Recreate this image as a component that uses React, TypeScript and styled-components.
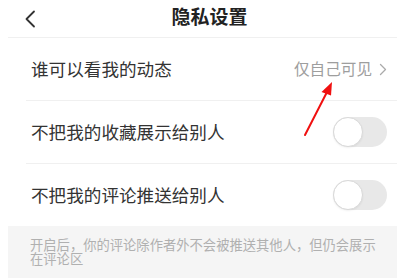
import React from "react";
import styled, { createGlobalStyle } from "styled-components";

const Global = createGlobalStyle`
  html, body { margin: 0; padding: 0; background: #fff; }
  body { font-family: "Noto Sans CJK SC", "Noto Sans", sans-serif; -webkit-font-smoothing: antialiased; }
`;

const Page = styled.div`
  position: relative;
  width: 400px;
  height: 279px;
  overflow: hidden;
  background: #fff;
`;

const Panel = styled.div`
  margin-left: 8px;
  width: 389px;
  display: flex;
  flex-direction: column;
`;

const Header = styled.div`
  height: 37px;
  display: grid;
  grid-template-columns: 40px 1fr 40px;
  align-items: center;
  border-bottom: 1px solid #f0f0f0;
`;

const Back = styled.div`
  display: flex;
  align-items: center;
  padding-left: 16px;
  height: 100%;
`;

const Title = styled.div`
  justify-self: center;
  padding-left: 14px;
  font-size: 19px;
  font-weight: 700;
  color: #222;
  line-height: 1;
  margin-top: -6px;
`;

const Row = styled.div<{ $last?: boolean }>`
  height: 62px;
  margin-left: 18px;
  display: flex;
  align-items: center;
  justify-content: space-between;
  padding-left: 5px;
  padding-right: 10px;
  border-bottom: ${(p) => (p.$last ? "none" : "1px solid #f0f0f0")};
`;

const Label = styled.span`
  font-size: 17.6px;
  color: #333;
  line-height: 1;
`;

const Value = styled.span`
  display: flex;
  align-items: center;
  gap: 7px;
  font-size: 15.6px;
  color: #9e9e9e;
  line-height: 1;
`;

const Track = styled.div`
  width: 54px;
  height: 30px;
  border-radius: 15px;
  background: #e8e8e8;
  display: flex;
  align-items: center;
`;

const Knob = styled.div`
  width: 28px;
  height: 28px;
  border-radius: 50%;
  background: #fff;
  border: 1px solid #d9d9d9;
  box-shadow: 0 1px 2px rgba(0, 0, 0, 0.06);
`;

const Note = styled.div`
  background: #f5f5f5;
  height: 52px;
  box-sizing: border-box;
  padding: 12px 0 0 22px;
  font-size: 13.3px;
  line-height: 14px;
  color: #b0b0b0;
`;

const NoteText = styled.div`
  width: 352px;
`;

const Arrow = styled.svg`
  position: absolute;
  left: 0;
  top: 0;
  pointer-events: none;
`;

const Switch = () => (
  <Track>
    <Knob />
  </Track>
);

export default function App() {
  return (
    <Page>
      <Global />
      <Panel>
        <Header>
          <Back>
            <svg width="12" height="18" viewBox="0 0 12 18">
              <path d="M10 1.5 L2.5 9 L10 16.5" fill="none" stroke="#333" strokeWidth="1.8" strokeLinecap="round" strokeLinejoin="round" />
            </svg>
          </Back>
          <Title>隐私设置</Title>
          <span />
        </Header>
        <Row>
          <Label>谁可以看我的动态</Label>
          <Value>
            仅自己可见
            <svg width="8" height="13" viewBox="0 0 8 13">
              <path d="M1.5 1.5 L6.5 6.5 L1.5 11.5" fill="none" stroke="#aaa" strokeWidth="1.3" strokeLinecap="round" strokeLinejoin="round" />
            </svg>
          </Value>
        </Row>
        <Row>
          <Label>不把我的收藏展示给别人</Label>
          <Switch />
        </Row>
        <Row $last>
          <Label>不把我的评论推送给别人</Label>
          <Switch />
        </Row>
        <Note>
          <NoteText>开启后，你的评论除作者外不会被推送其他人，但仍会展示在评论区</NoteText>
        </Note>
      </Panel>
      <Arrow width="400" height="279" viewBox="0 0 400 279">
        <line x1="305" y1="135" x2="327" y2="92" stroke="#f01010" strokeWidth="2" strokeLinecap="round" />
        <polygon points="332,82 321.5,92 331,95.5" fill="#f01010" />
      </Arrow>
    </Page>
  );
}
